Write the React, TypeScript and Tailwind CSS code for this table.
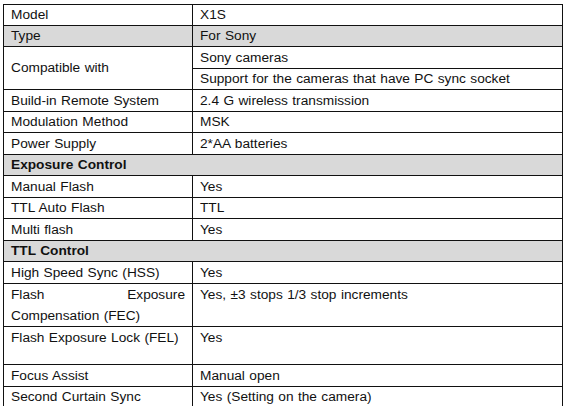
type Row =
  | { kind: 'pair'; label: string; value: string; h: string; gray?: boolean; top?: boolean; justify?: boolean }
  | { kind: 'head'; label: string; h: string };

const rows: Row[] = [
  { kind: 'pair', label: 'Model', value: 'X1S', h: 'h-[21px]' },
  { kind: 'pair', label: 'Type', value: 'For Sony', h: 'h-[21px]', gray: true },
  { kind: 'pair', label: 'Build-in Remote System', value: '2.4 G wireless transmission', h: 'h-[22px]' },
  { kind: 'pair', label: 'Modulation Method', value: 'MSK', h: 'h-[21px]' },
  { kind: 'pair', label: 'Power Supply', value: '2*AA batteries', h: 'h-[22px]' },
  { kind: 'head', label: 'Exposure Control', h: 'h-[21px]' },
  { kind: 'pair', label: 'Manual Flash', value: 'Yes', h: 'h-[22px]' },
  { kind: 'pair', label: 'TTL Auto Flash', value: 'TTL', h: 'h-[21px]' },
  { kind: 'pair', label: 'Multi flash', value: 'Yes', h: 'h-[22px]' },
  { kind: 'head', label: 'TTL Control', h: 'h-[21px]' },
  { kind: 'pair', label: 'High Speed Sync (HSS)', value: 'Yes', h: 'h-[22px]' },
  {
    kind: 'pair',
    label: 'Flash Exposure Compensation (FEC)',
    value: 'Yes, ±3 stops 1/3 stop increments',
    h: 'h-[42px]',
    top: true,
    justify: true,
  },
  { kind: 'pair', label: 'Flash Exposure Lock (FEL)', value: 'Yes', h: 'h-[38px]', top: true },
  { kind: 'pair', label: 'Focus Assist', value: 'Manual open', h: 'h-[22px]' },
  { kind: 'pair', label: 'Second Curtain Sync', value: 'Yes (Setting on the camera)', h: 'h-[21px]' },
];

const cell = 'border border-[#111] px-[7px] py-0 leading-[18px]';

export default function App() {
  const renderRow = (r: Row, i: number) => {
    if (r.kind === 'head') {
      return (
        <tr key={i} className={r.h}>
          <td colSpan={2} className={`${cell} bg-[#d9d9d9] font-bold align-middle`}>
            {r.label}
          </td>
        </tr>
      );
    }
    const va = r.top ? 'align-top leading-[21px]' : 'align-middle';
    return (
      <tr key={i} className={`${r.h} ${r.gray ? 'bg-[#d9d9d9]' : ''}`}>
        <td className={`${cell} ${va} ${r.justify ? 'text-justify' : ''}`}>{r.label}</td>
        <td className={`${cell} ${va}`}>{r.value}</td>
      </tr>
    );
  };

  return (
    <div className="w-[565px] h-[406px] bg-white overflow-hidden pt-[4px] pl-[3px]">
      <table
        className="border-collapse table-fixed w-[559px] text-[13.7px] [word-spacing:0.6px] text-[#111]"
        style={{ fontFamily: '"Liberation Sans", Arial, sans-serif' }}
      >
        <colgroup>
          <col className="w-[189px]" />
          <col className="w-[370px]" />
        </colgroup>
        <tbody>
          {rows.slice(0, 2).map(renderRow)}
          <tr className="h-[22px]">
            <td rowSpan={2} className={`${cell} align-middle`}>
              Compatible with
            </td>
            <td className={`${cell} align-middle`}>Sony cameras</td>
          </tr>
          <tr className="h-[21px]">
            <td className={`${cell} align-middle`}>Support for the cameras that have PC sync socket</td>
          </tr>
          {rows.slice(2).map((r, i) => renderRow(r, i + 2))}
        </tbody>
      </table>
    </div>
  );
}
